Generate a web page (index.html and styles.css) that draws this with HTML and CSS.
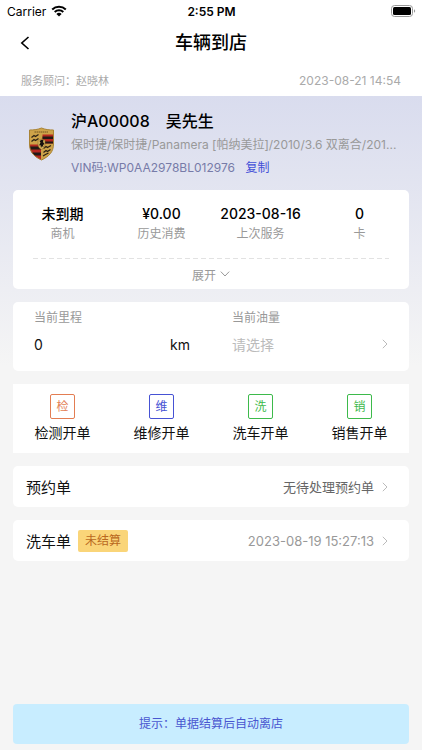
FILE: index.html
```html
<!DOCTYPE html>
<html lang="zh-CN">
<head>
    <meta charset="UTF-8">
    <title>车辆到店</title>
    <meta name="viewport" content="width=device-width, initial-scale=1.0">
    <link rel="stylesheet" href="styles.css">
</head>
<body>
    <header class="header">
        <div class="status-bar">
            <div class="carrier">
                Carrier
                <svg width="16" height="12" viewBox="0 0 16 12">
                    <path d="M1.2 4.5a9.8 9.8 0 0 1 13.6 0M3.7 7a6.2 6.2 0 0 1 8.6 0" fill="none" stroke="#000" stroke-width="2"/>
                    <path d="M8 11.6 5.4 8.9a3.8 3.8 0 0 1 5.2 0z"/>
                </svg>
            </div>
            <div class="time">2:55 PM</div>
            <div class="battery">
                <svg width="25" height="12" viewBox="0 0 25 12">
                    <rect x="0.5" y="0.5" width="21" height="11" rx="3" fill="#fff" stroke="#999"/>
                    <rect x="2" y="2" width="18" height="8" rx="1.5"/>
                    <path d="M23 4.2v3.6c1.6-.6 1.6-3 0-3.6z" fill="#999"/>
                </svg>
            </div>
        </div>
        <div class="nav-bar">
            <button class="back" aria-label="返回">
                <svg width="10" height="14" viewBox="0 0 10 14"><path d="M8.5 1 1.8 7l6.7 6" fill="none" stroke="#000" stroke-width="1.6"/></svg>
            </button>
            <h1>车辆到店</h1>
        </div>
        <div class="advisor">
            <span>服务顾问：赵晓林</span>
            <time>2023-08-21 14:54</time>
        </div>
    </header>

    <main class="content">
        <section class="car">
            <svg class="car-logo" width="27" height="34" viewBox="0 0 54 68">
                <defs>
                    <clipPath id="shield"><path d="M3 6C12 6 20 5 27 2c7 3 15 4 24 4v28c0 16-9 25-24 32C12 59 3 50 3 34z"/></clipPath>
                </defs>
                <g clip-path="url(#shield)">
                    <path fill="#cda349" d="M0 0h54v68H0z"/>
                    <path fill="#b5271f" d="M29 15h23v18H29zM2 35h24v30H2z"/>
                    <path fill="#221a16" d="M29 19h23v5H29zM29 29h23v4H29zM2 39h24v6H2zM2 51h24v6H2z"/>
                    <path d="m7 21 5-4 3 2 6-4M7 29l5-4 3 2 6-4M31 43l5-4 3 2 7-4M31 51l5-4 3 2 6-4M30 58l5-3 6-3" fill="none" stroke="#2b2115" stroke-width="2.5"/>
                    <path fill="#d9b45c" stroke="#8b6424" d="M20 26c3 0 5-1 7-2 2 1 4 2 7 2v8c0 6-3 9-7 11-4-2-7-5-7-11z"/>
                    <path fill="#17120e" d="M23 28l5-3 3 2-1 3 3 4-3 2 1 5-3-3-2 4-1-6-3 1 3-6z"/>
                    <path d="M13 10h28" stroke="#725621" stroke-width="2" stroke-dasharray="3 1"/>
                </g>
                <path d="M3 6C12 6 20 5 27 2c7 3 15 4 24 4v28c0 16-9 25-24 32C12 59 3 50 3 34z" fill="none" stroke="#a98335" stroke-width="2"/>
            </svg>
            <div class="car-info">
                <h2><span>沪A00008</span><span>吴先生</span></h2>
                <p class="model">保时捷/保时捷/Panamera [帕纳美拉]/2010/3.6 双离合/201...</p>
                <p class="vin">VIN码:WP0AA2978BL012976 <button class="copy">复制</button></p>
            </div>
        </section>

        <section class="card summary">
            <dl class="stats">
                <div><dd>未到期</dd><dt>商机</dt></div>
                <div><dd>¥0.00</dd><dt>历史消费</dt></div>
                <div><dd>2023-08-16</dd><dt>上次服务</dt></div>
                <div><dd>0</dd><dt>卡</dt></div>
            </dl>
            <svg class="divider" height="1"><line x1="0" y1="0.5" x2="100%" y2="0.5"/></svg>
            <button class="expand">
                展开
                <svg width="10" height="6" viewBox="0 0 10 6"><path d="m.8.6 4.2 4.4L9.2.6" fill="none" stroke="#999"/></svg>
            </button>
        </section>

        <section class="card readings">
            <div class="field">
                <label for="mileage">当前里程</label>
                <div class="control">
                    <input id="mileage" type="text" inputmode="numeric" value="0">
                    <span>km</span>
                </div>
            </div>
            <div class="field">
                <label for="fuel">当前油量</label>
                <div class="control">
                    <select id="fuel">
                        <option>请选择</option>
                    </select>
                    <svg class="arrow" viewBox="0 0 6 10"><path d="m.8.8 4.2 4.2L.8 9.2"/></svg>
                </div>
            </div>
        </section>

        <section class="actions">
            <button class="action check"><span class="badge">检</span>检测开单</button>
            <button class="action repair"><span class="badge">维</span>维修开单</button>
            <button class="action wash"><span class="badge">洗</span>洗车开单</button>
            <button class="action sale"><span class="badge">销</span>销售开单</button>
        </section>

        <a href="#" class="card order">
            <span class="order-name">预约单</span>
            <span class="order-value">无待处理预约单</span>
            <svg class="arrow" viewBox="0 0 6 10"><path d="m.8.8 4.2 4.2L.8 9.2"/></svg>
        </a>

        <a href="#" class="card order">
            <span class="order-name">洗车单</span>
            <span class="tag">未结算</span>
            <span class="order-value date">2023-08-19 15:27:13</span>
            <svg class="arrow" viewBox="0 0 6 10"><path d="m.8.8 4.2 4.2L.8 9.2"/></svg>
        </a>
    </main>

    <footer class="notice">提示：单据结算后自动离店</footer>
</body>
</html>
```

FILE: styles.css
```css
* {
    box-sizing: border-box;
}
body {
    margin: 0;
    min-height: 100vh;
    display: flex;
    flex-direction: column;
    background: #f5f5f5;
    color: #111;
    font-family: Inter, "Noto Sans CJK SC", sans-serif;
    font-size: 14px;
}
h1, h2, p, dl, dd {
    margin: 0;
}
button, input, select {
    font: inherit;
    color: inherit;
    border: 0;
    padding: 0;
    background: none;
}
svg {
    flex: none;
}
.header {
    background: #fff;
}
.status-bar {
    display: grid;
    grid-template-columns: 1fr auto 1fr;
    align-items: center;
    height: 22px;
    padding: 0 6px 0 7px;
    font-size: 12px;
    color: #000;
}
.carrier {
    display: flex;
    align-items: center;
    gap: 5px;
}
.time {
    font-weight: 600;
}
.battery {
    display: flex;
    justify-content: flex-end;
}
.nav-bar {
    display: grid;
    grid-template-columns: 40px 1fr 40px;
    align-items: center;
    height: 42px;
}
.back {
    display: flex;
    padding: 10px 0 10px 20px;
}
.nav-bar h1 {
    font-size: 18px;
    line-height: 26px;
    font-weight: 500;
    text-align: center;
    color: #000;
}
.advisor {
    display: flex;
    justify-content: space-between;
    align-items: center;
    height: 32px;
    padding: 0 21px;
    font-size: 11px;
    color: #aaa;
}
.advisor time {
    font-size: 12px;
}
.content {
    flex: 1;
    padding: 13px;
    background: linear-gradient(#d9dcee, #f5f5f5 270px);
}
.car {
    display: flex;
    align-items: center;
    gap: 16px;
    padding: 0 4px 0 15px;
}
.car-info {
    flex: 1;
    min-width: 0;
}
.car-info h2 {
    display: flex;
    gap: 16px;
    font-size: 16px;
    line-height: 24px;
    font-weight: 500;
    color: #000;
}
.car-info p {
    font-size: 12px;
    line-height: 23px;
}
.model {
    overflow: hidden;
    white-space: nowrap;
    text-overflow: ellipsis;
    color: #999;
}
.vin {
    color: #777ba8;
}
.copy {
    margin-left: 7px;
    color: #4350d8;
}
.card,
.actions {
    margin-top: 13px;
    background: #fff;
}
.card {
    border-radius: 5px;
}
.summary {
    margin-top: 11px;
    padding-top: 14px;
}
.stats {
    display: grid;
    grid-template-columns: repeat(4, 1fr);
    text-align: center;
}
.stats div {
    display: flex;
    flex-direction: column;
}
.stats dd {
    font-size: 14px;
    line-height: 20px;
    font-weight: 500;
    color: #000;
}
.stats dt {
    font-size: 12px;
    line-height: 20px;
    color: #999;
}
.divider {
    display: block;
    width: calc(100% - 40px);
    margin: 14px 20px 0;
}
.divider line {
    stroke: #e2e2e2;
    stroke-dasharray: 5 3;
}
.expand {
    display: flex;
    justify-content: center;
    align-items: center;
    gap: 4px;
    width: 100%;
    height: 30px;
    font-size: 12px;
    color: #999;
}
.readings {
    display: grid;
    grid-template-columns: repeat(2, minmax(0, 1fr));
    padding: 6px 0 11px;
}
.field {
    padding: 0 21px;
}
.field label {
    display: block;
    font-size: 12px;
    line-height: 20px;
    color: #999;
}
.control {
    display: flex;
    align-items: center;
    height: 32px;
}
.control input,
.control select {
    flex: 1;
    min-width: 0;
    appearance: none;
}
.control select {
    color: #bbb;
}
.arrow {
    width: 6px;
    height: 10px;
    fill: none;
    stroke: #bbb;
}
.actions {
    display: grid;
    grid-template-columns: repeat(4, 1fr);
    padding: 10px 0;
}
.action {
    display: flex;
    flex-direction: column;
    align-items: center;
    gap: 4px;
    line-height: 20px;
}
.badge {
    display: flex;
    justify-content: center;
    align-items: center;
    width: 25px;
    height: 25px;
    border: 1px solid;
    border-radius: 2px;
    font-size: 12px;
}
.check .badge {
    color: #e37d52;
}
.repair .badge {
    color: #4652d4;
}
.wash .badge,
.sale .badge {
    color: #3dba4b;
}
.order {
    display: flex;
    align-items: center;
    height: 41px;
    padding: 0 21px 0 13px;
    color: inherit;
    text-decoration: none;
}
.order-name {
    font-size: 15px;
}
.order-value {
    margin-left: auto;
    margin-right: 8px;
    font-size: 13px;
    color: #666;
}
.date {
    color: #999;
}
.tag {
    margin-left: 7px;
    padding: 0 7px;
    border-radius: 2px;
    background: #fad579;
    font-size: 12px;
    line-height: 22px;
    color: #b96820;
}
.notice {
    margin: 0 13px 6px;
    border-radius: 4px;
    background: #c8edff;
    font-size: 12px;
    line-height: 40px;
    text-align: center;
    color: #4856d0;
}
```
